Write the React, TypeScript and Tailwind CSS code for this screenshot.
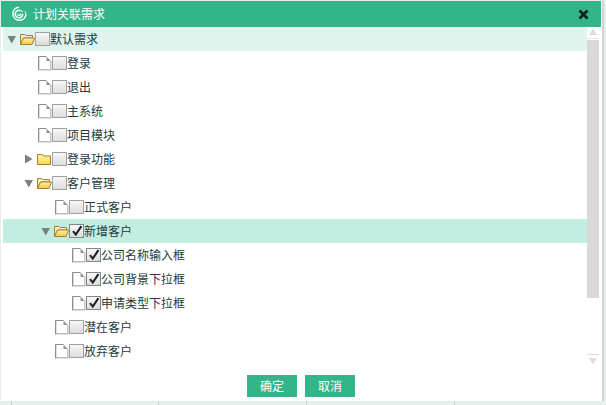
import React from "react";

type Row = { label: string; depth: number; kind: "open" | "closed" | "leaf"; checked?: boolean; bg?: string };

const rows: Row[] = [
  { label: "默认需求", depth: 0, kind: "open", bg: "bg-[#dff4ec]" },
  { label: "登录", depth: 1, kind: "leaf" },
  { label: "退出", depth: 1, kind: "leaf" },
  { label: "主系统", depth: 1, kind: "leaf" },
  { label: "项目模块", depth: 1, kind: "leaf" },
  { label: "登录功能", depth: 1, kind: "closed" },
  { label: "客户管理", depth: 1, kind: "open" },
  { label: "正式客户", depth: 2, kind: "leaf" },
  { label: "新增客户", depth: 2, kind: "open", checked: true, bg: "bg-[#c4ede2]" },
  { label: "公司名称输入框", depth: 3, kind: "leaf", checked: true },
  { label: "公司背景下拉框", depth: 3, kind: "leaf", checked: true },
  { label: "申请类型下拉框", depth: 3, kind: "leaf", checked: true },
  { label: "潜在客户", depth: 2, kind: "leaf" },
  { label: "放弃客户", depth: 2, kind: "leaf" },
];

const indent = ["pl-0", "pl-[17px]", "pl-[34px]", "pl-[51px]"];

function Arrow({ kind }: { kind: Row["kind"] }) {
  return (
    <span className="w-[17px] h-[14px] shrink-0 flex items-center justify-center">
      {kind === "open" && (
        <svg width="10" height="9" viewBox="0 0 10 9">
          <path d="M0.5 1h8.5L4.75 8.5z" fill="#7a8280" />
        </svg>
      )}
      {kind === "closed" && (
        <svg width="9" height="10" viewBox="0 0 9 10">
          <path d="M1 0.5v9L8.5 5z" fill="#7a8280" />
        </svg>
      )}
    </span>
  );
}

function FolderOpen({ id }: { id: string }) {
  return (
    <svg width="15" height="13" viewBox="0 0 15 13" className="shrink-0">
      <defs>
        <linearGradient id={id} x1="0" y1="0" x2="0" y2="1">
          <stop offset="0" stopColor="#fff3a8" />
          <stop offset="1" stopColor="#f2c844" />
        </linearGradient>
      </defs>
      <path d="M0.5 11.5V1.5H5L6 2.5H12.5V5H3.5z" fill="#f8ecc8" stroke="#a8802f" />
      <path d="M0.5 11.5L3.5 5H14.5L12 11.5z" fill={`url(#${id})`} stroke="#a8802f" />
    </svg>
  );
}

function FolderClosed() {
  return (
    <svg width="15" height="13" viewBox="0 0 15 13" className="shrink-0">
      <defs>
        <linearGradient id="fc" x1="0" y1="0" x2="0" y2="1">
          <stop offset="0" stopColor="#fff5a6" />
          <stop offset="1" stopColor="#f7d648" />
        </linearGradient>
      </defs>
      <path d="M0.5 1.5H5.5L6.5 3H13.5V11.5H0.5z" fill="url(#fc)" stroke="#a8802f" />
    </svg>
  );
}

function Page() {
  return (
    <svg width="14" height="15" viewBox="0 0 14 15" className="shrink-0 ml-[1px]">
      <path d="M0 0.5H8.5L13.5 5V14.5H0z" fill="#bcbcbc" />
      <path d="M1.5 0.5H8.2L12.2 4.6V13H1.5z" fill="#ffffff" />
      <path d="M0.5 0.5H8.5M0.5 0.5V14" stroke="#8c8c8c" fill="none" />
      <path d="M8.5 1V5H12.5z" fill="#8f8f8f" />
    </svg>
  );
}

function Check({ on }: { on?: boolean }) {
  return (
    <span
      className={`w-[15px] h-[14px] shrink-0 border bg-gradient-to-b from-[#f8f8f8] to-[#dcdcdc] flex items-center justify-center ${
        on ? "border-[#7f8686]" : "border-[#a2a2a2]"
      }`}
    >
      {on && (
        <svg width="12" height="12" viewBox="0 0 12 12">
          <path d="M2 6.2L4.8 9.6L10.4 1.2" fill="none" stroke="#1c2228" strokeWidth="2.1" />
        </svg>
      )}
    </span>
  );
}

export default function App() {
  return (
    <div className="w-[606px] h-[405px] bg-[#e6efec] flex flex-col overflow-hidden font-['Noto_Sans_CJK_SC','Liberation_Sans',sans-serif]">
      <div className="h-[401px] shrink-0 pt-[1px] pl-[1px] flex">
        <div className="w-[601px] h-[400px] bg-white flex flex-col">
          <div className="h-[26px] w-[600px] shrink-0 bg-[#33b58a] flex items-center pl-[10px] pr-[12px] text-white text-[12px]">
            <svg width="16" height="16" viewBox="0 0 16 16" className="shrink-0" fill="none" stroke="#ffffff" strokeLinecap="round">
              <path d="M7.5 1.2A6.6 6.6 0 1 0 14.8 9.5" strokeWidth="1.5" />
              <path d="M14.8 9.5Q15 7.5 14 6" strokeWidth="1.2" strokeOpacity="0.8" />
              <path d="M11.6 8.2A3.7 3.7 0 1 1 8.2 4.4" strokeWidth="1.6" />
              <path d="M8.2 4.4Q10 4.4 11.4 5.6" strokeWidth="1.1" strokeOpacity="0.8" />
              <path d="M6.6 8.8A1.5 1.5 0 0 0 9.4 8" strokeWidth="1.3" />
            </svg>
            <span className="ml-[6px] leading-none">计划关联需求</span>
            <svg width="11" height="11" viewBox="0 0 11 11" className="ml-auto shrink-0">
              <path d="M1.5 1.5L9.5 9.5M9.5 1.5L1.5 9.5" stroke="#10201c" strokeWidth="2.6" />
            </svg>
          </div>
          <div className="h-[336px] shrink-0 flex pl-[2px]">
            <div className="w-[584px] flex flex-col text-[12px] text-[#1d3b40]">
              {rows.map((r, i) => (
                <div key={r.label} className={`h-[24px] shrink-0 flex items-center ${r.bg ?? ""} ${indent[r.depth]}`}>
                  <Arrow kind={r.kind} />
                  <span className="w-[15px] flex justify-start shrink-0">
                    {r.kind === "open" ? <FolderOpen id={`fo${i}`} /> : r.kind === "closed" ? <FolderClosed /> : <Page />}
                  </span>
                  <Check on={r.checked} />
                  <span className="leading-none">{r.label}</span>
                </div>
              ))}
            </div>
            <div className="w-[12px] h-[338px] flex flex-col items-center">
              <svg width="12" height="8" viewBox="0 0 12 8" className="shrink-0 mt-[1px]">
                <path d="M6 0.5L10 7H2z" fill="#dcdcdc" />
              </svg>
              <div className="w-[12px] h-[1px] mt-[2px] bg-[#e2e2e2]" />
              <div className="w-[12px] h-[259px] mt-[1px] bg-[#d9d9d9]" />
              <div className="w-[12px] h-[1px] mt-[56px] bg-[#dcdcdc]" />
              <svg width="12" height="8" viewBox="0 0 12 8" className="shrink-0 mt-[2px]">
                <path d="M6 7.5L10 1H2z" fill="#dcdcdc" />
              </svg>
            </div>
          </div>
          <div className="flex-1 flex justify-center gap-[8px] pt-[12px] pr-[1px]">
            <button className="w-[50px] h-[22px] bg-[#33b58a] text-white text-[12px]">确定</button>
            <button className="w-[50px] h-[22px] bg-[#33b58a] text-white text-[12px]">取消</button>
          </div>
        </div>
        <div className="w-[2px] h-[400px] bg-[#cfd3d1]" />
      </div>
      <div className="h-[4px] flex">
        <div className="w-[12px] border-r border-[#c8cccb]" />
        <div className="w-[147px] border-r border-[#c8cccb]" />
        <div className="w-[148px] border-r border-[#c8cccb]" />
        <div className="w-[148px] border-r border-[#c8cccb]" />
      </div>
    </div>
  );
}
